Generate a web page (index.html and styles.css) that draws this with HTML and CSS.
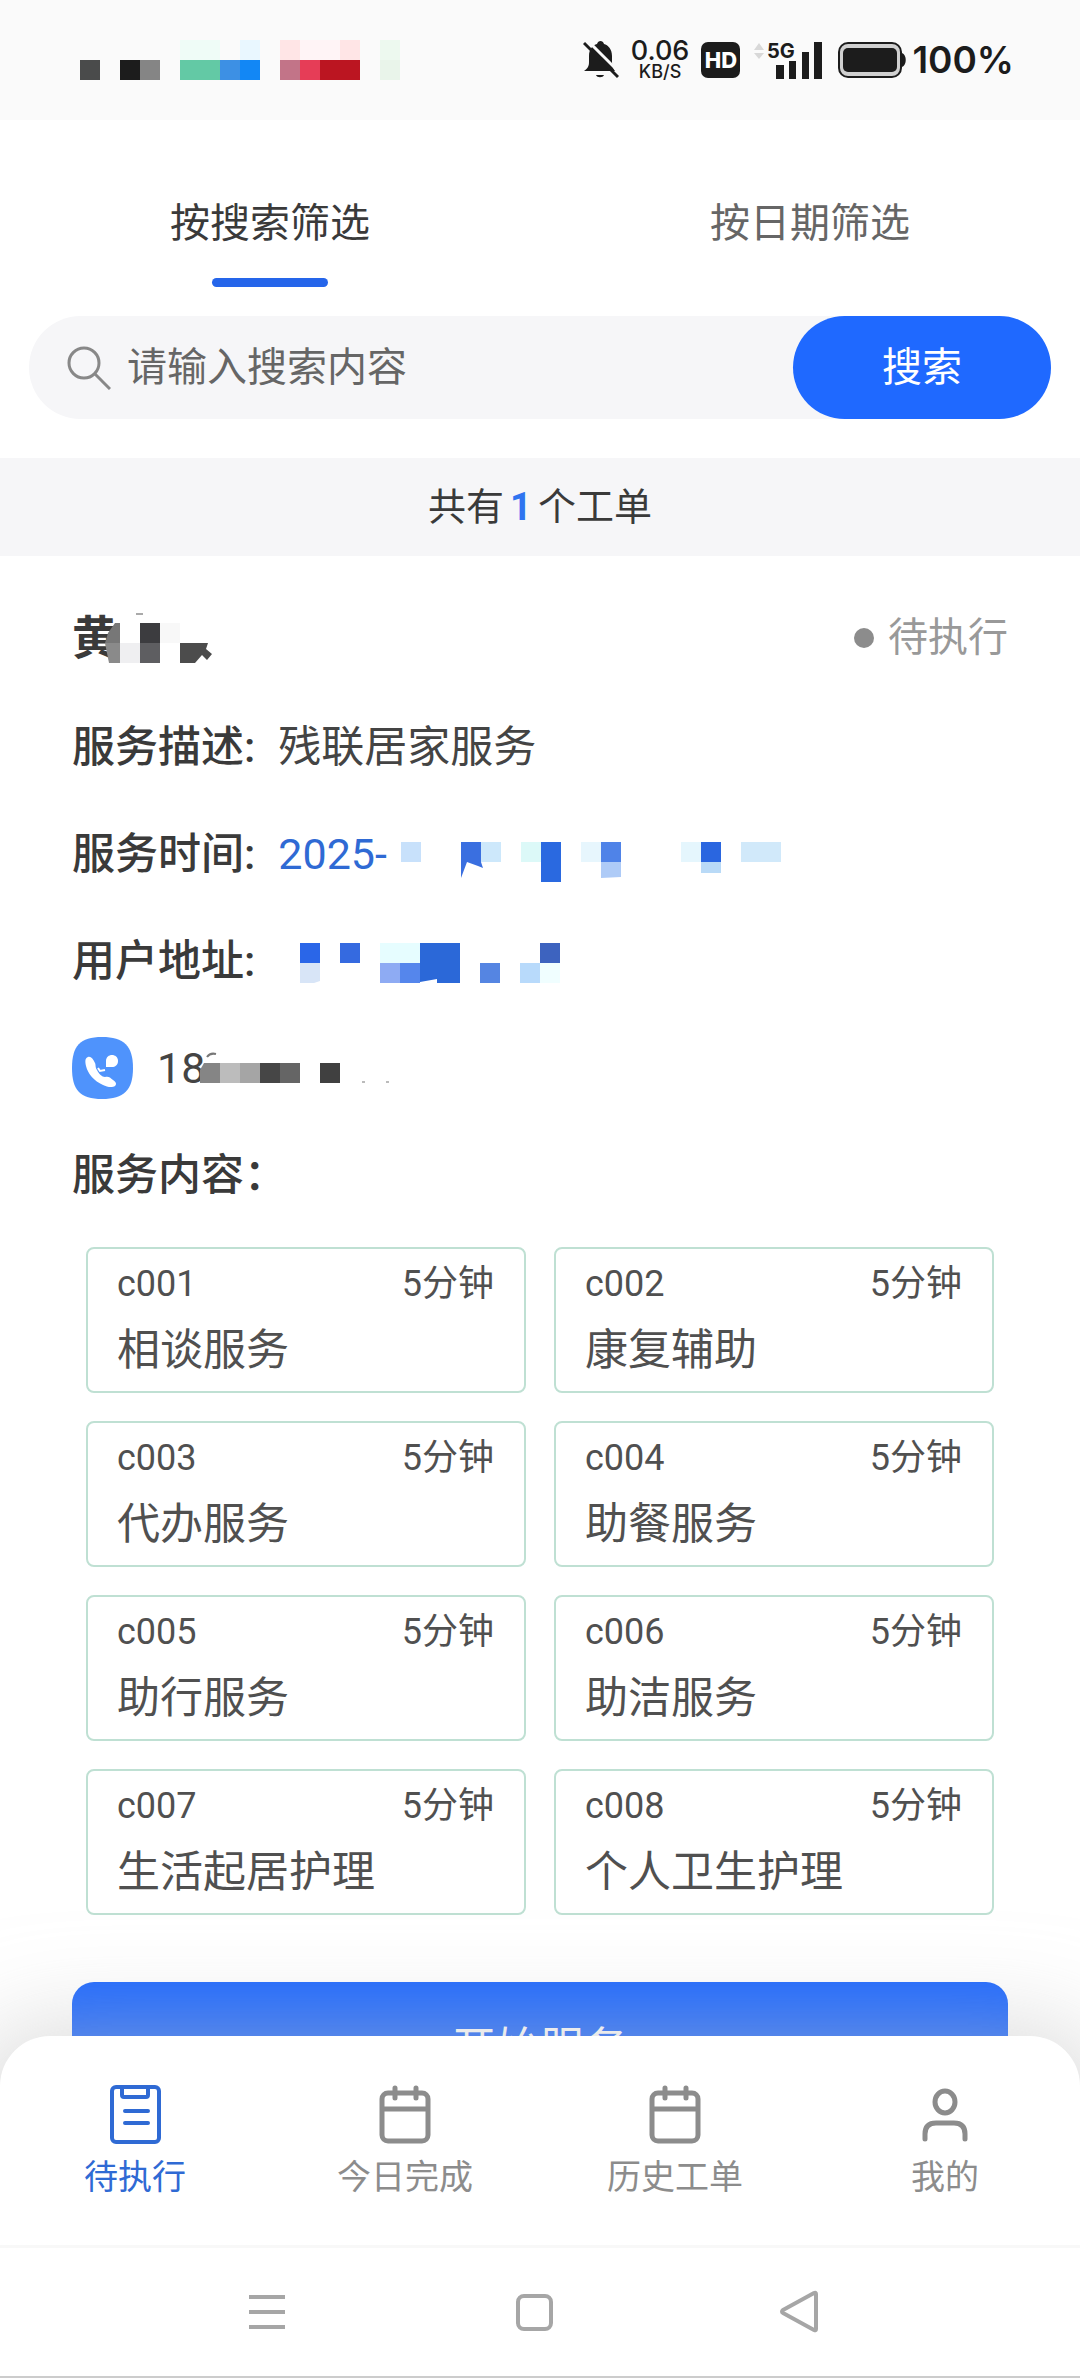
FILE: index.html
```html
<!DOCTYPE html>
<html lang="zh-CN">
<head>
    <meta charset="UTF-8">
    <meta name="viewport" content="width=device-width, initial-scale=1.0">
    <title>待执行工单</title>
    <link rel="stylesheet" href="styles.css">
</head>
<body>
    <!-- Status bar -->
    <div class="status-bar">
        <svg class="status-apps" width="320" height="40" viewBox="0 0 320 40" shape-rendering="crispEdges">
            <rect x="0" y="20" width="20" height="20" fill="#4a4b4b"/>
            <rect x="40" y="20" width="20" height="20" fill="#1c1c1c"/>
            <rect x="60" y="20" width="20" height="20" fill="#858585"/>
            <rect x="100" y="0" width="40" height="20" fill="#effcf7"/>
            <rect x="160" y="0" width="20" height="20" fill="#e9f7ff"/>
            <rect x="100" y="20" width="40" height="20" fill="#63c9a5"/>
            <rect x="140" y="20" width="20" height="20" fill="#3d90e4"/>
            <rect x="160" y="20" width="20" height="20" fill="#1287f5"/>
            <rect x="200" y="0" width="20" height="20" fill="#ffe5e6"/>
            <rect x="220" y="0" width="40" height="20" fill="#fff4f6"/>
            <rect x="260" y="0" width="20" height="20" fill="#ffe5e6"/>
            <rect x="200" y="20" width="20" height="20" fill="#c27488"/>
            <rect x="220" y="20" width="20" height="20" fill="#e63d57"/>
            <rect x="240" y="20" width="40" height="20" fill="#bb1521"/>
            <rect x="300" y="0" width="20" height="20" fill="#edf9ef"/>
            <rect x="300" y="20" width="20" height="20" fill="#e9f4ea"/>
        </svg>
        <div class="status-info">
            <svg width="36" height="38" viewBox="0 0 36 38">
                <path d="M1 30c4-3 5-5 5-9v-6c0-7 4-11 8-12 1-4 6-4 7 0 4 1 8 5 8 12v6c0 4 1 6 3 9zM13 34h8c-1 3-7 3-8 0z" fill="#1c1c1c"/>
                <path d="M5 0l33 33" stroke="#fafafa" stroke-width="3"/>
                <path d="M1 2l34 34" stroke="#1c1c1c" stroke-width="3"/>
            </svg>
            <div class="net-speed"><span class="net-value">0.06</span><span class="net-unit">KB/S</span></div>
            <span class="hd">HD</span>
            <svg width="70" height="38" viewBox="0 0 70 38">
                <path d="M2 9l5-7 5 7zM2 12l5 6 5-6z" fill="#d8d8d8"/>
                <text class="signal-label" x="15" y="17">5G</text>
                <path d="M24 24h8v14h-8zM37 20h7v18h-7zM50 11h7v27h-7zM62 1h8v37h-8z" fill="#1c1c1c"/>
            </svg>
            <svg class="battery" width="68" height="36" viewBox="0 0 68 36">
                <rect x="1" y="1" width="62" height="34" rx="9" fill="#d0d0d0" stroke="#1c1c1c" stroke-width="2"/>
                <rect x="5" y="6" width="54" height="24" rx="5" fill="#1c1c1c"/>
                <path d="M64 11c5 2 5 12 0 14z" fill="#1c1c1c"/>
            </svg>
            <span class="battery-level">100%</span>
        </div>
    </div>

    <main class="content">
        <div class="tabs" role="tablist">
            <button class="tab active" role="tab" aria-selected="true">按搜索筛选</button>
            <button class="tab" role="tab" aria-selected="false">按日期筛选</button>
        </div>

        <form class="search-bar">
            <svg width="44" height="44" viewBox="0 0 44 44" fill="none" stroke="#888" stroke-width="3">
                <circle cx="17" cy="17" r="15"/>
                <path d="M28 28l15 15"/>
            </svg>
            <input class="search-input" type="text" placeholder="请输入搜索内容" aria-label="请输入搜索内容">
            <button class="search-btn" type="button">搜索</button>
        </form>

        <div class="summary">共有<span class="count">1</span>个工单</div>

        <section class="order">
            <div class="order-header">
                <h2 class="order-name">黄
                    <svg class="mosaic name-mosaic" width="110" height="52" viewBox="0 0 110 52">
                        <path d="M17 11h-5l-7 10-3 10h15z" fill="#777"/>
                        <path d="M2 31h15v20H6z" fill="#8a8a8a"/>
                        <path d="M17 11h20v20H17z" fill="#fff"/>
                        <path d="M17 31h20v20H17z" fill="#efeff1"/>
                        <path d="M33 2h7" stroke="#aaa" stroke-width="2"/>
                        <path d="M37 11h20v20H37z" fill="#3c3c3f"/>
                        <path d="M37 31h20v20H37z" fill="#5e5e61"/>
                        <path d="M57 11h20v20H57z" fill="#f8f8f8"/>
                        <path d="M77 31h28l-2 6 6 5-5 6-5-5-7 8H77z" fill="#4c4c4c"/>
                    </svg>
                </h2>
                <span class="order-status">待执行</span>
            </div>

            <div class="row">
                <span class="label">服务描述:</span>
                <span class="value">残联居家服务</span>
            </div>
            <div class="row">
                <span class="label">服务时间:</span>
                <span class="value link">2025-</span>
                <svg class="mosaic time-mosaic" width="380" height="40" viewBox="0 0 380 40">
                    <path d="M0 0h20v20H0z" fill="#c8e1fb"/>
                    <path d="M60 0h20v20l2 6-5-2-11-4-6 16z" fill="#3a6fe0"/>
                    <path d="M80 0h20v20H80z" fill="#cde8fb"/>
                    <path d="M120 0h20v20h-20z" fill="#dcf9f8"/>
                    <path d="M140 0h20v40h-20z" fill="#2a69e0"/>
                    <path d="M180 0h20v20h-20z" fill="#e7f6fd"/>
                    <path d="M200 0h20v20h-20z" fill="#4f83e8"/>
                    <path d="M200 20h20v15l-20 1z" fill="#aecbf7"/>
                    <path d="M280 0h20v20h-20z" fill="#e5f6fd"/>
                    <path d="M300 0h20v20h-20z" fill="#2a66e0"/>
                    <path d="M300 20h20v11h-20z" fill="#b9daf7"/>
                    <path d="M340 0h40v20h-40z" fill="#d1e9fa"/>
                </svg>
            </div>
            <div class="row">
                <span class="label">用户地址:</span>
                <svg class="mosaic address-mosaic" width="262" height="40" viewBox="0 0 262 40">
                    <path d="M0 0h20v20H0z" fill="#2a66e8"/>
                    <path d="M0 20h20v18l-6 2H0z" fill="#d8e5f7"/>
                    <path d="M40 0h20v20H40z" fill="#356ae0"/>
                    <path d="M80 0h40v20H80z" fill="#e6fdff"/>
                    <path d="M80 20h20v20H80z" fill="#8eabf3"/>
                    <path d="M100 20h20v20h-20z" fill="#5586ec"/>
                    <path d="M120 0h40v40h-23v-4l-17 3z" fill="#2b68d8"/>
                    <path d="M180 20h20v20h-20z" fill="#5585e2"/>
                    <path d="M220 20h20v20h-20z" fill="#b8dafb"/>
                    <path d="M240 0h20v20h-20z" fill="#3d63bf"/>
                    <path d="M240 20h20v20h-20z" fill="#f0feff"/>
                </svg>
            </div>
            <div class="row">
                <svg class="phone-icon" width="61" height="62" viewBox="0 0 61 62">
                    <path d="M30 0c22 0 31 9 31 31S52 62 30 62 0 53 0 31 8 0 30 0z" fill="#4f93fc"/>
                    <path d="M16 20c3-1 5 2 7 6 1 2 0 4 2 7 2 4 5 7 8 7 3-1 5 0 8 3 3 2 4 4 2 6-3 2-8 1-12-1-9-4-15-11-17-19-1-5-1-8 2-9z" fill="#fff"/>
                    <path d="M34 24c0-4 3-6 6-6s6 2 6 6-3 6-6 6h-6z" fill="#fff"/>
                    <path d="M26 31l2 3 5-1" fill="none" stroke="#fff" stroke-width="2"/>
                </svg>
                <span class="value phone">18
                    <svg class="mosaic phone-mosaic" width="190" height="32" viewBox="0 0 190 32">
                        <path d="M7 5c2-3 5-4 9-3" fill="none" stroke="#777" stroke-width="2"/>
                        <path d="M4 11h16v20H0V18z" fill="#858585"/>
                        <path d="M20 11h20v20H20z" fill="#bcbcbc"/>
                        <path d="M40 11h20v20H40z" fill="#a5a5a5"/>
                        <path d="M60 11h20v20H60z" fill="#464646"/>
                        <path d="M80 11h20v20H80z" fill="#656565"/>
                        <path d="M120 11h20v20h-20z" fill="#404040"/>
                        <path d="M162 30h3M186 30h3" stroke="#bbb" stroke-width="2"/>
                    </svg>
                </span>
            </div>
            <div class="row">
                <span class="label">服务内容：</span>
            </div>

            <div class="services">
                <div class="service">
                    <div class="service-top"><span>c001</span><span>5分钟</span></div>
                    <div class="service-name">相谈服务</div>
                </div>
                <div class="service">
                    <div class="service-top"><span>c002</span><span>5分钟</span></div>
                    <div class="service-name">康复辅助</div>
                </div>
                <div class="service">
                    <div class="service-top"><span>c003</span><span>5分钟</span></div>
                    <div class="service-name">代办服务</div>
                </div>
                <div class="service">
                    <div class="service-top"><span>c004</span><span>5分钟</span></div>
                    <div class="service-name">助餐服务</div>
                </div>
                <div class="service">
                    <div class="service-top"><span>c005</span><span>5分钟</span></div>
                    <div class="service-name">助行服务</div>
                </div>
                <div class="service">
                    <div class="service-top"><span>c006</span><span>5分钟</span></div>
                    <div class="service-name">助洁服务</div>
                </div>
                <div class="service">
                    <div class="service-top"><span>c007</span><span>5分钟</span></div>
                    <div class="service-name">生活起居护理</div>
                </div>
                <div class="service">
                    <div class="service-top"><span>c008</span><span>5分钟</span></div>
                    <div class="service-name">个人卫生护理</div>
                </div>
            </div>

            <button class="start-btn" type="button">开始服务</button>
        </section>
    </main>

    <!-- Bottom tab bar -->
    <nav class="tab-bar">
        <a class="tab-item active" href="#pending">
            <svg width="60" height="60" viewBox="0 0 60 60" fill="none" stroke="currentColor" stroke-width="4" stroke-linecap="round" stroke-linejoin="round">
                <rect x="7" y="3" width="47" height="55" rx="4"/>
                <path d="M17 4v7q0 2 2 2h22q2 0 2-2V4M20 27h23M20 39h23"/>
            </svg>
            <span>待执行</span>
        </a>
        <a class="tab-item" href="#today">
            <svg width="60" height="60" viewBox="0 0 60 60" fill="none" stroke="currentColor" stroke-width="5" stroke-linecap="round">
                <rect x="7" y="9" width="46" height="48" rx="6"/>
                <path d="M8 25h44M20 4v10M41 4v10"/>
            </svg>
            <span>今日完成</span>
        </a>
        <a class="tab-item" href="#history">
            <svg width="60" height="60" viewBox="0 0 60 60" fill="none" stroke="currentColor" stroke-width="5" stroke-linecap="round">
                <rect x="7" y="9" width="46" height="48" rx="6"/>
                <path d="M8 25h44M20 4v10M41 4v10"/>
            </svg>
            <span>历史工单</span>
        </a>
        <a class="tab-item" href="#mine">
            <svg width="60" height="60" viewBox="0 0 60 60" fill="none" stroke="currentColor" stroke-width="5" stroke-linecap="round">
                <ellipse cx="30" cy="18" rx="10" ry="11"/>
                <path d="M10 55v-5q0-11 11-11h18q11 0 11 11v5"/>
            </svg>
            <span>我的</span>
        </a>
    </nav>

    <!-- System navigation -->
    <div class="system-nav">
        <button class="system-btn" aria-label="菜单">
            <svg width="44" height="44" viewBox="0 0 44 44" stroke="#a6a6a6" stroke-width="4"><path d="M4 7h36M4 22h36M4 37h36"/></svg>
        </button>
        <button class="system-btn" aria-label="主页">
            <svg width="44" height="44" viewBox="0 0 44 44" fill="none" stroke="#a6a6a6" stroke-width="4"><rect x="7" y="6" width="33" height="33" rx="6"/></svg>
        </button>
        <button class="system-btn" aria-label="返回">
            <svg width="44" height="44" viewBox="0 0 44 44" fill="none" stroke="#a6a6a6" stroke-width="4" stroke-linejoin="round"><path d="M37 3q2-1 2 1v35q0 2-2 1L6 23q-2-1 0-3z"/></svg>
        </button>
    </div>
</body>
</html>
```

FILE: styles.css
```css
:root {
    --blue: #1f69ff;
    --blue-text: #2f6ad4;
    --text: #3a3a3a;
    --text-secondary: #505050;
    --text-muted: #8c8c8c;
    --bg-grey: #f6f6f8;
    --service-border: #bfe0d3;
}

* {
    box-sizing: border-box;
}

body {
    margin: 0;
    height: 100vh;
    display: flex;
    flex-direction: column;
    background: #ffffff;
    color: var(--text);
    font-family: Roboto, "Noto Sans CJK SC", sans-serif;
    font-size: 43px;
    line-height: 60px;
}

button,
input {
    font-family: inherit;
    line-height: inherit;
    border: none;
    background: none;
    padding: 0;
    margin: 0;
}

svg {
    display: block;
    flex-shrink: 0;
}

/* Status bar */
.status-bar {
    height: 120px;
    flex-shrink: 0;
    display: flex;
    justify-content: space-between;
    align-items: center;
    padding: 0 66px 0 80px;
    background: #fafafa;
}

.status-info {
    display: flex;
    align-items: center;
    gap: 12px;
    color: #1c1c1c;
    font-family: Inter, sans-serif;
}

.net-speed {
    display: flex;
    flex-direction: column;
    align-items: center;
}

.net-value {
    font-size: 27px;
    font-weight: 500;
    line-height: 24px;
}

.net-unit {
    font-size: 18px;
    font-weight: 500;
    line-height: 18px;
}

.hd {
    width: 39px;
    line-height: 36px;
    border-radius: 7px;
    background: #1c1c1c;
    color: #ffffff;
    font-size: 22px;
    font-weight: 800;
    text-align: center;
}

.signal-label {
    font-size: 20px;
    font-weight: 700;
    fill: #1c1c1c;
}

.battery {
    margin-left: 4px;
}

.battery-level {
    margin-left: -6px;
    font-size: 37px;
    font-weight: 600;
}

/* Filter tabs and search */
.content {
    flex: 1;
    min-height: 0;
    overflow: hidden;
}

.tabs {
    display: flex;
    padding-top: 74px;
    margin-bottom: 29px;
}

.tab {
    flex: 1;
    display: flex;
    flex-direction: column;
    align-items: center;
    gap: 24px;
    color: #666666;
    font-size: 40px;
}

.tab::after {
    content: "";
    width: 116px;
    height: 9px;
    border-radius: 5px;
}

.tab.active {
    color: var(--text);
}

.tab.active::after {
    background: #2565ea;
}

.search-bar {
    height: 103px;
    display: flex;
    align-items: center;
    gap: 16px;
    margin: 0 29px 39px;
    padding-left: 38px;
    border-radius: 52px;
    background: var(--bg-grey);
}

.search-input {
    flex: 1;
    min-width: 0;
    height: 100%;
    font-size: 40px;
    outline: none;
}

.search-input::placeholder {
    color: #666666;
}

.search-btn {
    width: 258px;
    height: 100%;
    border-radius: 52px;
    background: var(--blue);
    color: #ffffff;
    font-size: 40px;
}

.summary {
    background: var(--bg-grey);
    font-size: 38px;
    line-height: 98px;
    text-align: center;
}

.count {
    margin: 0 6px;
    color: #2f74f0;
    font-weight: 700;
}

/* Work order */
.order {
    padding: 26px 72px 0;
}

.order-header {
    height: 111px;
    display: flex;
    justify-content: space-between;
    align-items: center;
}

.order-name {
    position: relative;
    margin: 0;
    font-size: 46px;
    font-weight: 700;
}

.order-status {
    display: flex;
    align-items: center;
    gap: 14px;
    color: #999999;
    font-size: 40px;
}

.order-status::before {
    content: "";
    width: 20px;
    height: 20px;
    border-radius: 50%;
    background: #8c8c8c;
}

.row {
    height: 107px;
    display: flex;
    align-items: center;
}

.label {
    margin-right: 23px;
    font-weight: 500;
}

.value {
    color: #444444;
}

.value.link {
    color: var(--blue-text);
}

.time-mosaic {
    margin-left: 14px;
    margin-top: 16px;
}

.address-mosaic {
    margin-left: 22px;
    margin-top: 4px;
}

.phone-icon {
    margin-right: 24px;
}

.phone {
    position: relative;
}

/* Mosaics that lie over the text they hide */
.name-mosaic {
    position: absolute;
    left: 31px;
    top: 4px;
}

.phone-mosaic {
    position: absolute;
    left: 43px;
    top: 14px;
}

.services {
    display: grid;
    grid-template-columns: 1fr 1fr;
    gap: 28px;
    margin: 19px 14px 67px;
}

.service {
    padding: 10px 30px 8px 29px;
    border: 2px solid var(--service-border);
    border-radius: 8px;
    color: var(--text-secondary);
}

.service-top {
    display: flex;
    justify-content: space-between;
    margin-bottom: 8px;
    font-size: 36px;
    line-height: 50px;
}

.service-name {
    line-height: 66px;
}

.start-btn {
    width: 100%;
    height: 134px;
    border-radius: 22px;
    background: var(--blue);
    color: #ffffff;
    font-size: 44px;
}

/* Bottom tab bar */
.tab-bar {
    position: relative;
    flex-shrink: 0;
    height: 209px;
    display: flex;
    padding-top: 48px;
    border-radius: 50px 50px 0 0;
    background: #ffffff;
    box-shadow: 0 24px 100px 30px rgba(190, 190, 190, 0.6);
}

.tab-item {
    flex: 1;
    display: flex;
    flex-direction: column;
    align-items: center;
    gap: 8px;
    color: var(--text-muted);
    font-size: 34px;
    line-height: 50px;
    text-decoration: none;
}

.tab-item.active {
    color: var(--blue-text);
}

.system-nav {
    position: relative;
    flex-shrink: 0;
    height: 133px;
    display: flex;
    padding: 0 148px 0 134px;
    border-top: 3px solid #f8f8f8;
    border-bottom: 2px solid #cccccc;
    background: #ffffff;
}

.system-btn {
    flex: 1;
    display: flex;
    justify-content: center;
    align-items: center;
}
```
